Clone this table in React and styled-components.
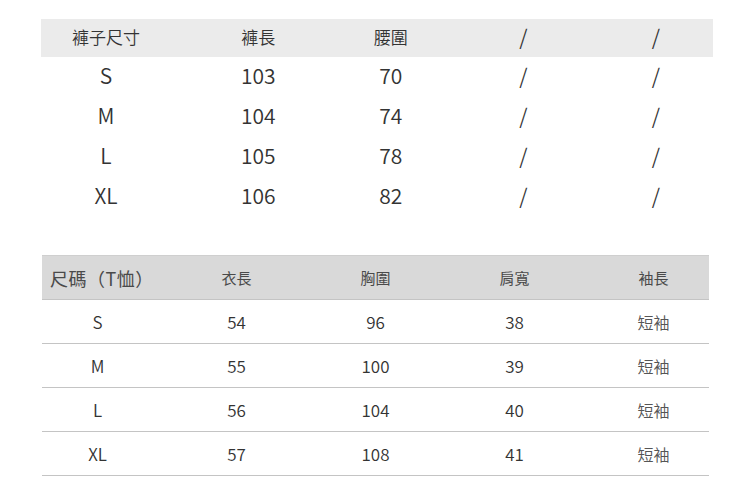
import React from 'react';
import styled, { createGlobalStyle } from 'styled-components';

const GlobalStyle = createGlobalStyle`
  html, body {
    margin: 0;
    padding: 0;
    background: #ffffff;
  }
  body {
    font-family: "Noto Sans CJK TC", "Noto Sans", sans-serif;
    color: #333333;
  }
`;

const pantsHead = ['褲子尺寸', '褲長', '腰圍', '/', '/'];
const pantsRows = [
  ['S', '103', '70', '/', '/'],
  ['M', '104', '74', '/', '/'],
  ['L', '105', '78', '/', '/'],
  ['XL', '106', '82', '/', '/'],
];

const shirtHead = ['尺碼（T恤）', '衣長', '胸圍', '肩寬', '袖長'];
const shirtRows = [
  ['S', '54', '96', '38', '短袖'],
  ['M', '55', '100', '39', '短袖'],
  ['L', '56', '104', '40', '短袖'],
  ['XL', '57', '108', '41', '短袖'],
];

const App = () => {
  return (
    <>
      <GlobalStyle />
      <StPage>
        {/* 褲子尺寸表 */}
        <StPantsTable>
          <StPantsRow $head>
            {pantsHead.map((cell, i) => (
              <StPantsCell key={i} $small={cell !== '/'}>
                {cell}
              </StPantsCell>
            ))}
          </StPantsRow>
          {pantsRows.map((row) => (
            <StPantsRow key={row[0]}>
              {row.map((cell, i) => (
                <StPantsCell key={i}>{cell}</StPantsCell>
              ))}
            </StPantsRow>
          ))}
        </StPantsTable>

        {/* T恤尺寸表 */}
        <StShirtTable>
          <StShirtRow $head>
            {shirtHead.map((cell, i) => (
              <StShirtHeadCell key={i} $first={i === 0}>
                {cell}
              </StShirtHeadCell>
            ))}
          </StShirtRow>
          {shirtRows.map((row) => (
            <StShirtRow key={row[0]}>
              {row.map((cell, i) => (
                <StShirtCell key={i} $cjk={i === 4}>
                  {cell}
                </StShirtCell>
              ))}
            </StShirtRow>
          ))}
        </StShirtTable>
      </StPage>
    </>
  );
};

export default App;

const StPage = styled.main`
  width: 750px;
  height: 499px;
  padding-top: 19px;
  box-sizing: border-box;
  display: flex;
  flex-direction: column;
  gap: 38px;
  overflow: hidden;
`;

const StPantsTable = styled.section`
  margin-left: 41px;
  width: 672px;
  display: flex;
  flex-direction: column;
`;

const StPantsRow = styled.div`
  display: grid;
  grid-template-columns: 151px repeat(4, 132.5px);
  align-items: center;
  height: ${(props) => (props.$head ? '38px' : '40px')};
  background: ${(props) => (props.$head ? '#ebebeb' : 'transparent')};
`;

const StPantsCell = styled.div`
  text-align: center;
  font-size: ${(props) => (props.$small ? '17px' : '21px')};
  font-weight: 350;
  color: #333333;
  line-height: 1;
  padding-bottom: 3px;

  &:first-child {
    padding-right: 21px;
  }
`;

const StShirtTable = styled.section`
  margin-left: 42px;
  width: 667px;
  display: flex;
  flex-direction: column;
  border-top: 1px solid #cfcfcf;
`;

const StShirtRow = styled.div`
  display: grid;
  grid-template-columns: repeat(5, 139px);
  justify-content: center;
  align-items: center;
  height: 44px;
  box-sizing: border-box;
  border-bottom: 1px solid #c4c4c4;
  background: ${(props) => (props.$head ? '#d9d9d9' : 'transparent')};
`;

const StShirtHeadCell = styled.div`
  text-align: ${(props) => (props.$first ? 'left' : 'center')};
  padding-left: ${(props) => (props.$first ? '22px' : '0')};
  font-size: ${(props) => (props.$first ? '18px' : '15px')};
  letter-spacing: ${(props) => (props.$first ? '0.5px' : '0')};
  color: #4a4a4a;
  line-height: 1;
`;

const StShirtCell = styled.div`
  text-align: center;
  font-size: ${(props) => (props.$cjk ? '16px' : '17px')};
  font-weight: 350;
  color: ${(props) => (props.$cjk ? '#555555' : '#333333')};
  line-height: 1;
`;
